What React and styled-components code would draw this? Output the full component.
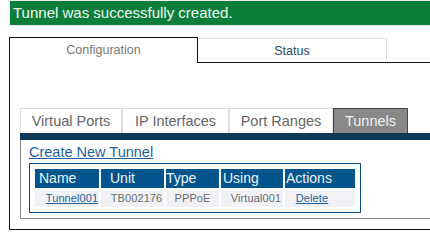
import React from "react";
import styled, { createGlobalStyle } from "styled-components";

const GlobalStyle = createGlobalStyle`
  html, body {
    margin: 0;
    padding: 0;
    overflow: hidden;
    background: #ffffff;
    font-family: "Liberation Sans", Arial, sans-serif;
  }
`;

const columns = [
  { title: "Name", width: 64, indent: 4, value: "Tunnel001", link: true, shift: 5 },
  { title: "Unit", width: 63, indent: 9, value: "TB002176", shift: 4 },
  { title: "Type", width: 53, indent: 0, value: "PPPoE", shift: 0 },
  { title: "Using", width: 62, indent: 2, value: "Virtual001", shift: 4 },
  { title: "Actions", width: 70, indent: 1, value: "Delete", link: true, shift: -8 },
];

const subTabs = [
  { label: "Virtual Ports", width: 102 },
  { label: "IP Interfaces", width: 107 },
  { label: "Port Ranges", width: 104 },
  { label: "Tunnels", width: 75, active: true },
];

function App() {
  return (
    <Page>
      <GlobalStyle />
      <Message>Tunnel was successfully created.</Message>
      <TabRow>
        <MainTab $active>Configuration</MainTab>
        <MainTab>Status</MainTab>
        <TabFiller />
      </TabRow>
      <Panel>
        <Section>
          <SubTabRow>
            {subTabs.map((t) => (
              <SubTab key={t.label} $width={t.width} $active={t.active}>
                {t.label}
              </SubTab>
            ))}
          </SubTabRow>
          <NavyBar />
          <SectionBody>
            <CreateLink href="#">Create New Tunnel</CreateLink>
            <TableBox>
              <Grid $cols={columns.map((c) => c.width + "px").join(" ")}>
                {columns.map((c) => (
                  <HeadCell key={c.title} $indent={c.indent}>
                    {c.title}
                  </HeadCell>
                ))}
                {columns.map((c) => (
                  <DataCell key={c.value} $shift={c.shift}>
                    {c.link ? <CellLink href="#">{c.value}</CellLink> : c.value}
                  </DataCell>
                ))}
              </Grid>
            </TableBox>
          </SectionBody>
        </Section>
      </Panel>
    </Page>
  );
}

export default App;

const Page = styled.div`
  padding-left: 9px;
`;

const Message = styled.div`
  height: 24px;
  border: 1px solid #ececec;
  border-right: none;
  background-color: #0b7f3a;
  color: #eef8f1;
  font-size: 15px;
  line-height: 24px;
  padding-left: 3px;
`;

const TabRow = styled.div`
  display: flex;
  align-items: flex-end;
  margin-top: 11px;
`;

const MainTab = styled.div`
  box-sizing: border-box;
  width: 189px;
  height: ${(p) => (p.$active ? "26px" : "25px")};
  background: #ffffff;
  border: 1px solid ${(p) => (p.$active ? "#111111" : "#dcdde4")};
  border-bottom: ${(p) => (p.$active ? "none" : "1px solid #111111")};
  border-left: ${(p) => (p.$active ? "1px solid #111111" : "none")};
  color: ${(p) => (p.$active ? "#777777" : "#2c4868")};
  font-size: 12.5px;
  line-height: ${(p) => (p.$active ? "24px" : "25px")};
  text-align: center;
`;

const TabFiller = styled.div`
  flex: 1;
  height: 24px;
  border-bottom: 1px solid #111111;
`;

const Panel = styled.div`
  border-left: 1px solid #111111;
  border-bottom: 1px solid #111111;
  padding: 45px 0 10px 10px;
`;

const Section = styled.div`
  display: flex;
  flex-direction: column;
`;

const SubTabRow = styled.div`
  display: flex;
`;

const SubTab = styled.div`
  box-sizing: border-box;
  width: ${(p) => p.$width}px;
  height: 25px;
  border: 1px solid ${(p) => (p.$active ? "#444444" : "#dcdde5")};
  border-bottom: none;
  background: ${(p) => (p.$active ? "#888888" : "#ffffff")};
  color: ${(p) => (p.$active ? "#f2f2f2" : "#666666")};
  font-size: 14.5px;
  line-height: 25px;
  text-align: center;
`;

const NavyBar = styled.div`
  height: 7px;
  background-color: #0e3a59;
`;

const SectionBody = styled.div`
  border-left: 1px solid #888888;
  border-bottom: 1px solid #888888;
  padding: 4px 0 5px 8px;
`;

const CreateLink = styled.a`
  display: block;
  width: fit-content;
  font-size: 14.5px;
  line-height: 17px;
  color: #1f5f9f;
  text-decoration: underline;
`;

const TableBox = styled.div`
  margin-top: 2px;
  width: 320px;
  border: 1px solid #0a5189;
  padding: 5px;
`;

const Grid = styled.div`
  display: grid;
  grid-template-columns: ${(p) => p.$cols};
  grid-template-rows: 19px 17px;
  gap: 2px;
`;

const HeadCell = styled.div`
  background-color: #04558d;
  color: #eef4fa;
  font-size: 14px;
  line-height: 19px;
  padding-left: ${(p) => p.$indent}px;
  white-space: nowrap;
`;

const DataCell = styled.div`
  background-color: #f0f2f6;
  color: #6a6a6a;
  font-size: 11px;
  line-height: 17px;
  text-align: center;
  white-space: nowrap;
  letter-spacing: 0.1px;
  padding-left: ${(p) => Math.max(p.$shift, 0) * 2}px;
  padding-right: ${(p) => Math.max(-p.$shift, 0) * 2}px;
`;

const CellLink = styled.a`
  color: #1f5f9f;
  text-decoration: underline;
`;
